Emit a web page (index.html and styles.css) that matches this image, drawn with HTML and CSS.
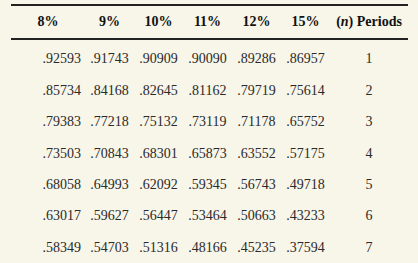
FILE: index.html
```html
<!DOCTYPE html>
<html>
<head>
<meta charset="utf-8">
<link rel="stylesheet" href="styles.css">
</head>
<body>
<table class="pv">
  <thead>
    <tr>
      <th class="c1">8%</th><th>9%</th><th>10%</th><th>11%</th><th>12%</th><th>15%</th><th class="per">(<i>n</i>) Periods</th>
    </tr>
  </thead>
  <tbody>
    <tr class="first"><td class="c1">.92593</td><td>.91743</td><td>.90909</td><td>.90090</td><td>.89286</td><td>.86957</td><td class="per">1</td></tr>
    <tr><td class="c1">.85734</td><td>.84168</td><td>.82645</td><td>.81162</td><td>.79719</td><td>.75614</td><td class="per">2</td></tr>
    <tr><td class="c1">.79383</td><td>.77218</td><td>.75132</td><td>.73119</td><td>.71178</td><td>.65752</td><td class="per">3</td></tr>
    <tr><td class="c1">.73503</td><td>.70843</td><td>.68301</td><td>.65873</td><td>.63552</td><td>.57175</td><td class="per">4</td></tr>
    <tr><td class="c1">.68058</td><td>.64993</td><td>.62092</td><td>.59345</td><td>.56743</td><td>.49718</td><td class="per">5</td></tr>
    <tr><td class="c1">.63017</td><td>.59627</td><td>.56447</td><td>.53464</td><td>.50663</td><td>.43233</td><td class="per">6</td></tr>
    <tr><td class="c1">.58349</td><td>.54703</td><td>.51316</td><td>.48166</td><td>.45235</td><td>.37594</td><td class="per">7</td></tr>
  </tbody>
</table>
</body>
</html>
```

FILE: styles.css
```css
html, body {
  margin: 0;
  padding: 0;
  background: #f8f5e9;
}
body {
  padding: 4px 0 0 11px;
  font-family: "Liberation Serif", "Times New Roman", serif;
  font-size: 14px;
  color: #1e1e1e;
}
.pv {
  border-collapse: collapse;
  table-layout: fixed;
  width: 397px;
  border-top: 2px solid #222;
}
.pv th, .pv td {
  padding: 0;
  width: 49px;
  text-align: center;
  white-space: nowrap;
}
.pv .c1 { width: 74px; }
.pv .per { width: 78px; }
.pv thead th {
  height: 32px;
  font-weight: bold;
  color: #111;
  border-bottom: 2px solid #222;
}
.pv td.c1 {
  text-align: right;
  padding-right: 4px;
}
.pv tbody td {
  height: 31.33px;
  color: #2a2a2a;
}
.pv tbody tr.first td {
  height: 33.33px;
  padding-top: 2px;
}
```
